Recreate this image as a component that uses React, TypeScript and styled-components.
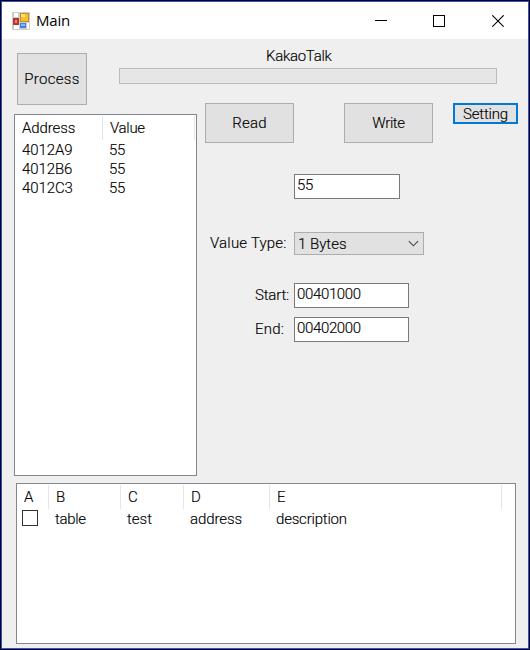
import React from "react";
import styled, { createGlobalStyle } from "styled-components";

const GlobalStyle = createGlobalStyle`
  *, *::before, *::after { box-sizing: border-box; }
  body { margin: 0; background: #000; overflow: hidden; }
`;

const Frame = styled.div`
  width: 530px;
  height: 650px;
  border: 1px solid #000;
  background: #efefef;
  font: 300 15px/18px Roboto, "Noto Sans CJK KR", sans-serif;
  color: #000;
  white-space: pre;
  cursor: default;
  -webkit-text-stroke: 0.15px #000;
`;

const WindowBody = styled.div`
  height: 648px;
  border: 1px solid #3350dc;
  display: flex;
  flex-direction: column;
`;

const TitleBar = styled.header`
  height: 37px;
  flex: none;
  background: #fff;
  display: flex;
  align-items: center;
  padding-left: 10px;
`;

const Title = styled.h1`
  flex: 1;
  margin: 0 0 2px 6px;
  font: 400 15px/20px "Open Sans", "Noto Sans", sans-serif;
  letter-spacing: -0.2px;
  -webkit-text-stroke: 0;
`;

const CaptionButtons = styled.div`
  display: flex;
  margin-right: 1px;
`;

const CaptionButton = styled.div`
  width: 58.5px;
  height: 37px;
  display: grid;
  place-items: center;
`;

const TopRow = styled.div`
  display: flex;
  height: 64px;
  flex: none;
  padding: 10px 0 0 15px;
`;

const Text = styled.span<{ $ls?: number }>`
  letter-spacing: ${(p) => p.$ls ?? 0}px;
`;

const Button = styled.button<{ $w: number; $h: number; $focused?: boolean }>`
  width: ${(p) => p.$w}px;
  height: ${(p) => p.$h}px;
  flex: none;
  padding: 0;
  border: ${(p) => (p.$focused ? "2px solid #0078d7" : "1px solid #adadad")};
  background: #e1e1e1;
  color: inherit;
  font: inherit;
`;

const ProcessButton = styled(Button)`
  margin-top: 4px;
`;

const ProgressGroup = styled.div`
  width: 378px;
  margin-left: 32px;
`;

const Caption = styled.div`
  height: 19px;
  padding-left: 147px;
  line-height: 14px;
`;

const Progress = styled.div`
  height: 16px;
  border: 1px solid #bcbcbc;
  background: #e6e6e6;
`;

const MiddleRow = styled.div`
  display: flex;
  height: 380px;
  flex: none;
  padding-left: 12px;
`;

const ListView = styled.div<{ $w: number; $h: number }>`
  width: ${(p) => p.$w}px;
  height: ${(p) => p.$h}px;
  flex: none;
  border: 1px solid #828790;
  background: #fff;
  padding-top: 1px;
`;

const AddressList = styled(ListView)`
  margin-top: 11px;
`;

const RecordList = styled(ListView)`
  margin-left: 14px;
`;

const HeaderRow = styled.div`
  display: flex;
  height: 24px;
  margin-bottom: 1px;
`;

const HeaderCell = styled.div<{ $w: number }>`
  width: ${(p) => p.$w}px;
  flex: none;
  border-right: 1px solid #e5e5e5;
  padding: 3px 0 0 7px;
`;

const DataRow = styled.div`
  display: flex;
  height: 19px;
  line-height: 19px;
`;

const DataCell = styled.div<{ $w: number }>`
  width: ${(p) => p.$w}px;
  flex: none;
  padding-left: 6px;
`;

const AddressCell = styled(DataCell)`
  padding-left: 7px;
`;

const CheckBox = styled.div`
  width: 16px;
  height: 16px;
  margin-left: -1px;
  border: 1px solid #333;
  background: #fff;
`;

const Form = styled.div`
  width: 313px;
  margin-left: 8px;
`;

const Actions = styled.div`
  display: flex;
  align-items: flex-start;
  height: 71px;
`;

const WriteButton = styled(Button)`
  margin-left: 50px;
`;

const SettingButton = styled(Button)`
  margin-left: 20px;
`;

const Field = styled.div<{ $h: number }>`
  display: grid;
  grid-template-columns: 89px auto;
  align-items: start;
  justify-content: start;
  height: ${(p) => p.$h}px;
`;

const FieldLabel = styled.label<{ $pad: number; $top: number }>`
  padding: ${(p) => p.$top}px 0 0 ${(p) => p.$pad}px;
`;

const TextBox = styled.div<{ $w: number }>`
  grid-column: 2;
  width: ${(p) => p.$w}px;
  height: 25px;
  border: 1px solid #7a7a7a;
  background: #fff;
  padding: 1px 0 0 2px;
`;

const Select = styled.div`
  width: 130px;
  height: 23px;
  border: 1px solid #adadad;
  background: #e1e1e1;
  display: flex;
  justify-content: space-between;
  padding: 2px 4px 0 3px;
`;

const Chevron = styled.svg`
  margin-top: 5px;
`;

const addresses = ["4012A9", "4012B6", "4012C3"];

const recordColumns = [
  { title: "A", width: 32 },
  { title: "B", width: 72 },
  { title: "C", width: 63 },
  { title: "D", width: 86 },
  { title: "E", width: 232 },
];

const FormIcon = () => (
  <svg width="18" height="18" viewBox="0 0 18 18" shapeRendering="crispEdges">
    <rect width="18" height="18" fill="#cdcdcd" />
    <path d="M2 1h4v4H2zM2 13h4v4H2zM15 11h2v6h-2zM6 11h1v6H6z" fill="#fff" />
    <rect x="8" y="1" width="9" height="9" fill="#c48f14" />
    <rect x="9" y="2" width="7" height="7" fill="#f4c130" />
    <rect x="9" y="2" width="4" height="3" fill="#ffe07a" />
    <rect x="1" y="6" width="6" height="7" fill="#b8352c" />
    <rect x="3" y="8" width="2" height="3" fill="#ee8577" />
    <rect x="8" y="11" width="6" height="5" fill="#4a7fdc" />
    <rect x="9" y="12" width="4" height="2" fill="#87b4fa" />
  </svg>
);

export default function App() {
  return (
    <>
      <GlobalStyle />
      <Frame>
        <WindowBody>
          <TitleBar>
            <FormIcon />
            <Title>Main</Title>
            <CaptionButtons>
              <CaptionButton>
                <svg width="12" height="12" shapeRendering="crispEdges">
                  <path d="M0 5.5h12" stroke="#000" />
                </svg>
              </CaptionButton>
              <CaptionButton>
                <svg width="12" height="12" shapeRendering="crispEdges">
                  <rect x=".5" y=".5" width="11" height="11" fill="none" stroke="#000" />
                </svg>
              </CaptionButton>
              <CaptionButton>
                <svg width="12" height="12">
                  <path d="M.3.3l11.4 11.4M11.7.3L.3 11.7" stroke="#000" strokeWidth="1.1" />
                </svg>
              </CaptionButton>
            </CaptionButtons>
          </TitleBar>

          <TopRow>
            <ProcessButton $w={70} $h={52}><Text $ls={0.3}>Process</Text></ProcessButton>
            <ProgressGroup>
              <Caption><Text $ls={-0.3}>KakaoTalk</Text></Caption>
              <Progress />
            </ProgressGroup>
          </TopRow>

          <MiddleRow>
            <AddressList $w={183} $h={362}>
              <HeaderRow>
                <HeaderCell $w={88}><Text $ls={-0.1}>Address</Text></HeaderCell>
                <HeaderCell $w={92}><Text $ls={-0.3}>Value</Text></HeaderCell>
              </HeaderRow>
              {addresses.map((address) => (
                <DataRow key={address}>
                  <AddressCell $w={87}><Text $ls={-0.1}>{address}</Text></AddressCell>
                  <AddressCell $w={92}><Text $ls={-0.2}>55</Text></AddressCell>
                </DataRow>
              ))}
            </AddressList>

            <Form>
              <Actions>
                <Button $w={89} $h={40}><Text $ls={0.2}>Read</Text></Button>
                <WriteButton $w={89} $h={40}><Text $ls={-0.4}>Write</Text></WriteButton>
                <SettingButton $w={65} $h={21} $focused><Text $ls={-0.2}>Setting</Text></SettingButton>
              </Actions>
              <Field $h={58}>
                <TextBox $w={106}><Text $ls={-0.2}>55</Text></TextBox>
              </Field>
              <Field $h={51}>
                <FieldLabel $pad={5} $top={2}><Text $ls={0.2}>Value Type:</Text></FieldLabel>
                <Select>
                  <Text>1 Bytes</Text>
                  <Chevron width="11" height="8" viewBox="0 0 11 8">
                    <path d="M.8 1.2L5.4 5.8L10 1.2" fill="none" stroke="#444" strokeWidth="1.1" />
                  </Chevron>
                </Select>
              </Field>
              <Field $h={34}>
                <FieldLabel $pad={50} $top={3}><Text $ls={-0.2}>Start:</Text></FieldLabel>
                <TextBox $w={115}><Text $ls={-0.35}>00401000</Text></TextBox>
              </Field>
              <Field $h={25}>
                <FieldLabel $pad={50} $top={3}><Text $ls={0.2}>End:</Text></FieldLabel>
                <TextBox $w={115}><Text $ls={-0.35}>00402000</Text></TextBox>
              </Field>
            </Form>
          </MiddleRow>

          <RecordList $w={500} $h={161}>
            <HeaderRow>
              {recordColumns.map((column) => (
                <HeaderCell key={column.title} $w={column.width}>{column.title}</HeaderCell>
              ))}
            </HeaderRow>
            <DataRow>
              <DataCell $w={32}><CheckBox /></DataCell>
              <DataCell $w={72}><Text $ls={-0.3}>table</Text></DataCell>
              <DataCell $w={63}><Text>test</Text></DataCell>
              <DataCell $w={86}><Text $ls={-0.1}>address</Text></DataCell>
              <DataCell $w={232}><Text $ls={-0.2}>description</Text></DataCell>
            </DataRow>
          </RecordList>
        </WindowBody>
      </Frame>
    </>
  );
}
